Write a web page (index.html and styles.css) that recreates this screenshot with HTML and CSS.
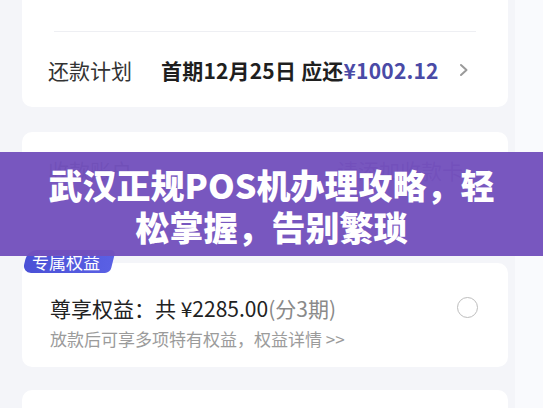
FILE: index.html
```html
<!DOCTYPE html>
<html lang="zh-CN">
<head>
<meta charset="utf-8">
<title>武汉正规POS机办理攻略</title>
<link rel="stylesheet" href="styles.css">
</head>
<body>
<div class="page">
  <section class="card card-top">
    <div class="row row-cut">
      <span class="label">借款用途</span>
      <span class="value">个人日常消费</span>
    </div>
    <div class="divider"></div>
    <div class="row">
      <span class="label">还款计划</span>
      <span class="value strong">首期12月25日 应还<em class="money">¥1002.12</em></span>
      <svg class="chev" width="10" height="16" viewBox="0 0 10 16"><path d="M2 3 L7.5 8 L2 13" fill="none" stroke="#9a9a9a" stroke-width="2" stroke-linecap="round" stroke-linejoin="round"/></svg>
    </div>
  </section>

  <section class="card card-two">
    <div class="row">
      <span class="label">收款账户</span>
      <span class="link">请添加收款卡</span>
    </div>
  </section>

  <section class="card card-three">
    <span class="badge">专属权益</span>
    <div class="perk">
      <div class="perk-text">
        <p class="perk-title">尊享权益：共 ¥2285.00<span class="muted">(分3期)</span></p>
        <p class="perk-sub">放款后可享多项特有权益，权益详情 &gt;&gt;</p>
      </div>
      <span class="radio"></span>
    </div>
  </section>

  <section class="card card-four"></section>
</div>

<div class="banner">
  <h1>武汉正规POS机办理攻略，轻松掌握，告别繁琐</h1>
</div>
</body>
</html>
```

FILE: styles.css
```css
* { box-sizing: border-box; }

html, body {
  margin: 0;
  padding: 0;
  height: 100%;
  overflow: hidden;
}

body {
  background: #f9fafd;
  font-family: "Noto Sans CJK SC", "Noto Sans", sans-serif;
  color: #2a2a2a;
}

.page {
  width: 515px;
  min-height: 100%;
  background: #f4f5f9;
  padding: 0 7px 40px 22px;
  display: flex;
  flex-direction: column;
}

.card {
  background: #ffffff;
  border-radius: 10px;
  width: 486px;
}

.card-top {
  margin-top: -44px;
}

.row {
  height: 75px;
  display: flex;
  align-items: center;
  padding: 0 41px 0 26px;
  font-size: 21px;
}

.row-cut {
  align-items: flex-end;
  padding-bottom: 43px;
  color: #c8c8c8;
}

.row-cut .label,
.row-cut .value {
  color: #d6d6d6;
}

.label {
  width: 113px;
  flex: none;
  color: #333333;
  white-space: nowrap;
}

.value {
  flex: 1;
  white-space: nowrap;
  color: #333;
}

.strong {
  font-weight: 700;
  color: #1f1f1f;
  letter-spacing: 0.2px;
}

.money {
  font-style: normal;
  color: #4a4aa6;
}

.chev {
  flex: none;
  margin-right: -2px;
}

.divider {
  height: 1px;
  background: #eeeff3;
  margin: 0 32px;
}

.card-two {
  margin-top: 25px;
  height: 100px;
}

.card-two .row {
  height: 76px;
}

.card-two .label {
  color: #555;
}

.link {
  flex: 1;
  text-align: right;
  color: #7a5a9a;
  margin-right: 4px;
}

.card-three {
  margin-top: 31px;
  position: relative;
  padding: 31px 30px 17px 28px;
}

.badge {
  position: absolute;
  left: 0;
  top: -13px;
  height: 23px;
  width: 88px;
  color: #ffffff;
  font-size: 17px;
  line-height: 23px;
  padding-left: 10px;
  z-index: 0;
}

.badge::before {
  content: "";
  position: absolute;
  inset: 0;
  background: linear-gradient(90deg, #4a50d6, #5a60e4);
  border-radius: 9px 5px 5px 9px;
  transform: skewX(-14deg);
  transform-origin: bottom left;
  z-index: -1;
}

.perk {
  display: flex;
  align-items: flex-start;
}

.perk-text {
  flex: 1;
}

.perk-title {
  margin: 0;
  font-size: 21px;
  line-height: 28px;
  color: #222222;
  white-space: nowrap;
}

.muted {
  color: #8a8a8a;
}

.perk-sub {
  margin: 6px 0 0;
  font-size: 17px;
  line-height: 22px;
  color: #9b9b9b;
  white-space: nowrap;
}

.radio {
  flex: none;
  width: 21px;
  height: 21px;
  border: 1.6px solid #bdbdbd;
  border-radius: 50%;
  margin-top: 3px;
}

.card-four {
  margin-top: 23px;
  height: 60px;
}

.banner {
  position: absolute;
  top: 152px;
  left: 0;
  right: 0;
  height: 104px;
  background: rgba(114, 80, 188, 0.96);
  display: flex;
  align-items: center;
  justify-content: center;
  padding-top: 4px;
}

.banner h1 {
  margin: 0;
  padding: 0 40px;
  font-size: 34px;
  line-height: 42px;
  font-weight: 900;
  color: #ffffff;
  text-align: center;
}
```
